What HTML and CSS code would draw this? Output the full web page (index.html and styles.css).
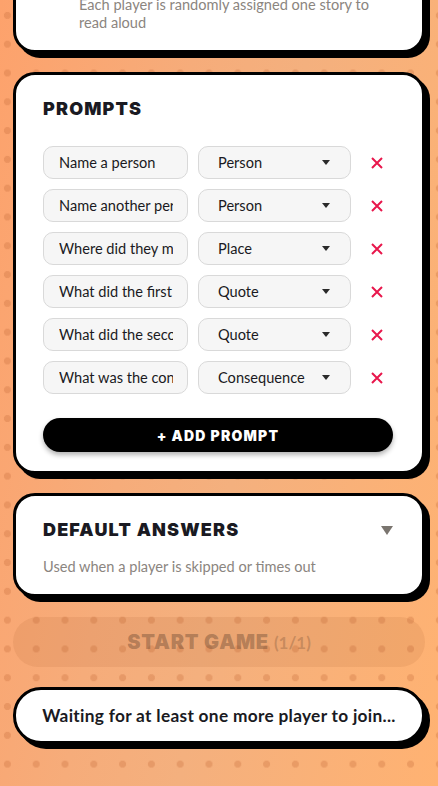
FILE: index.html
```html
<!DOCTYPE html>
<html lang="en">
<head>
<meta charset="utf-8">
<title>Story setup</title>
<link rel="stylesheet" href="styles.css">
</head>
<body>
<main class="page">
  <section class="card card-mode">
    <p class="muted mode-text">Each player is randomly assigned one story to read aloud</p>
  </section>

  <section class="card">
    <h2 class="card-title">PROMPTS</h2>
    <div class="prompt-list">
      <div class="prompt-row">
        <input class="field" type="text" value="Name a person">
        <div class="select"><span>Person</span><i class="caret"></i></div>
        <button class="remove" aria-label="Remove"><svg viewBox="0 0 12 12" width="12" height="12"><path d="M1 1L11 11M11 1L1 11" stroke="#e8174c" stroke-width="2" fill="none"/></svg></button>
      </div>
      <div class="prompt-row">
        <input class="field" type="text" value="Name another person">
        <div class="select"><span>Person</span><i class="caret"></i></div>
        <button class="remove" aria-label="Remove"><svg viewBox="0 0 12 12" width="12" height="12"><path d="M1 1L11 11M11 1L1 11" stroke="#e8174c" stroke-width="2" fill="none"/></svg></button>
      </div>
      <div class="prompt-row">
        <input class="field" type="text" value="Where did they meet?">
        <div class="select"><span>Place</span><i class="caret"></i></div>
        <button class="remove" aria-label="Remove"><svg viewBox="0 0 12 12" width="12" height="12"><path d="M1 1L11 11M11 1L1 11" stroke="#e8174c" stroke-width="2" fill="none"/></svg></button>
      </div>
      <div class="prompt-row">
        <input class="field" type="text" value="What did the first person say?">
        <div class="select"><span>Quote</span><i class="caret"></i></div>
        <button class="remove" aria-label="Remove"><svg viewBox="0 0 12 12" width="12" height="12"><path d="M1 1L11 11M11 1L1 11" stroke="#e8174c" stroke-width="2" fill="none"/></svg></button>
      </div>
      <div class="prompt-row">
        <input class="field" type="text" value="What did the second person say?">
        <div class="select"><span>Quote</span><i class="caret"></i></div>
        <button class="remove" aria-label="Remove"><svg viewBox="0 0 12 12" width="12" height="12"><path d="M1 1L11 11M11 1L1 11" stroke="#e8174c" stroke-width="2" fill="none"/></svg></button>
      </div>
      <div class="prompt-row">
        <input class="field" type="text" value="What was the consequence?">
        <div class="select"><span>Consequence</span><i class="caret"></i></div>
        <button class="remove" aria-label="Remove"><svg viewBox="0 0 12 12" width="12" height="12"><path d="M1 1L11 11M11 1L1 11" stroke="#e8174c" stroke-width="2" fill="none"/></svg></button>
      </div>
    </div>
    <button class="add-btn">+ ADD PROMPT</button>
  </section>

  <section class="card card-defaults">
    <div class="card-head">
      <h2 class="card-title">DEFAULT ANSWERS</h2>
      <i class="tri"></i>
    </div>
    <p class="muted">Used when a player is skipped or times out</p>
  </section>

  <button class="start-btn"><span class="start-main">START GAME</span> <span class="start-count">(1/1)</span></button>

  <div class="card waiting">Waiting for at least one more player to join...</div>
</main>
</body>
</html>
```

FILE: styles.css
```css
* { box-sizing: border-box; }

html, body {
  margin: 0;
  padding: 0;
}

body {
  min-height: 786px;
  overflow: hidden;
  font-family: "Lato", "Segoe UI", sans-serif;
  color: #1a1a22;
  background-color: #f9ab74;
  background-image:
    radial-gradient(circle at 14.4px 14.4px, rgba(200, 110, 60, 0.32) 3.2px, rgba(200, 110, 60, 0) 3.9px),
    linear-gradient(100deg, #fda26c 0%, #f6ac7a 35%, #f4b07e 55%, #ffb272 100%);
  background-size: 28.8px 28.8px, 100% 100%;
  background-position: -7px 1px, 0 0;
}

.page {
  padding: 0 13px 30px;
  display: flex;
  flex-direction: column;
  gap: 19px;
}

.card {
  background: #fff;
  border: 3px solid #000;
  border-radius: 22px;
  box-shadow: 5px 5px 0 #000;
  padding: 22px 29px 19px 27px;
}

.card-mode {
  margin-top: -30px;
  padding: 23px 48px 18px 63px;
}

.muted {
  margin: 0;
  color: #8b8580;
  font-size: 14.6px;
  line-height: 18px;
}

.card-title {
  margin: 0;
  font-family: "Inter", "Liberation Sans", sans-serif;
  font-weight: 900;
  font-size: 18px;
  line-height: 24px;
  letter-spacing: 1.15px;
  color: #1a1a22;
}

.prompt-list {
  margin-top: 25px;
  display: flex;
  flex-direction: column;
  gap: 10px;
}

.prompt-row {
  display: grid;
  grid-template-columns: 145px 153px 1fr;
  gap: 10px;
  align-items: center;
}

.field, .select {
  height: 33px;
  border: 1px solid #d9d9d9;
  border-radius: 10px;
  background: #f6f6f6;
  font-family: "Lato", "Segoe UI", sans-serif;
  font-size: 14.6px;
  color: #1a1a22;
}

.field {
  width: 100%;
  padding: 0 14px 0 15px;
  outline: none;
}

.select {
  display: flex;
  align-items: center;
  justify-content: space-between;
  padding: 0 20px 0 19px;
}

.caret {
  width: 0;
  height: 0;
  border-left: 4.5px solid transparent;
  border-right: 4.5px solid transparent;
  border-top: 5px solid #2a2a2a;
}

.remove {
  border: 0;
  background: transparent;
  padding: 0;
  height: 33px;
  display: flex;
  align-items: center;
  justify-content: center;
}

.add-btn {
  display: block;
  width: 100%;
  margin-top: 24px;
  height: 34px;
  border: 0;
  border-radius: 17px;
  background: #000;
  color: #fff;
  font-family: "Inter", "Liberation Sans", sans-serif;
  font-weight: 900;
  font-size: 14px;
  letter-spacing: 1.2px;
  box-shadow: 0 3px 5px rgba(0, 0, 0, 0.3);
}

.card-defaults {
  padding-bottom: 18px;
}

.card-head {
  display: flex;
  align-items: center;
  justify-content: space-between;
  margin-bottom: 16px;
}

.tri {
  width: 0;
  height: 0;
  border-left: 6px solid transparent;
  border-right: 6px solid transparent;
  border-top: 9px solid #7a756f;
}

.start-btn {
  margin-top: 1px;
  height: 50px;
  border: 0;
  border-radius: 25px;
  background: rgba(170, 95, 45, 0.13);
  color: rgba(95, 65, 45, 0.4);
  display: flex;
  align-items: center;
  justify-content: center;
  gap: 5px;
  padding: 0;
}

.start-main {
  font-family: "Inter", "Liberation Sans", sans-serif;
  font-weight: 900;
  font-size: 20px;
  letter-spacing: 0.8px;
}

.start-count {
  font-family: "Lato", sans-serif;
  font-weight: 700;
  font-size: 17px;
  opacity: 0.7;
}

.waiting {
  margin-top: 1px;
  border-radius: 28px;
  height: 57px;
  padding: 0 8px;
  display: flex;
  align-items: center;
  justify-content: center;
  font-weight: 700;
  font-size: 17.3px;
  letter-spacing: 0.3px;
  color: #1a1a22;
}
```
